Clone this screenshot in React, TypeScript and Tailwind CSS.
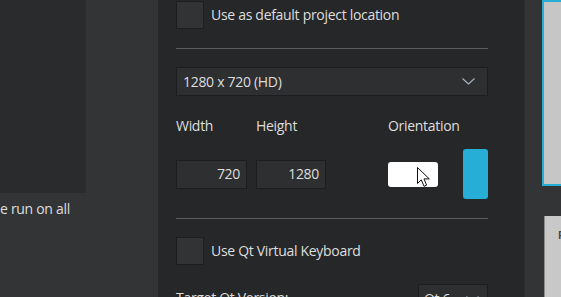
import React from 'react';

function Chevron() {
    return (
        <svg width="13" height="7" viewBox="0 0 13 7" fill="none" className="shrink-0">
            <path d="M0.5 0.5 L6.5 6 L12.5 0.5" stroke="#aab4be" strokeWidth="1.1" />
        </svg>
    );
}

function Cursor() {
    return (
        <svg width="14" height="21" viewBox="0 0 14 21" className="shrink-0">
            <path
                d="M0.5 0.5 L0.5 16.5 L4.3 12.8 L7 19.3 L9.6 18.2 L7 11.9 L12.3 11.9 Z"
                fill="#ffffff"
                stroke="#111111"
                strokeWidth="1"
                strokeLinejoin="round"
            />
        </svg>
    );
}

function Checkbox({ label }: { label: string }) {
    return (
        <div className="flex items-center gap-[7px] h-[28px]">
            <div className="w-[28px] h-[28px] shrink-0 bg-[#323335] border border-[#1c1d1e]" />
            <span className="whitespace-nowrap">{label}</span>
        </div>
    );
}

export default function App() {
    return (
        <div
            className="flex h-[297px] w-[561px] overflow-hidden bg-[#333436] text-[#dedede] text-[14px] leading-[18px] tracking-[-0.3px]"
            style={{ fontFamily: '"Open Sans", "Noto Sans", sans-serif' }}
        >
            {/* left pane */}
            <div className="w-[158px] shrink-0 flex flex-col">
                <div className="w-[86px] h-[193px] shrink-0 bg-[#2a2b2d]" />
                <p className="mt-[7px] whitespace-nowrap">e run on all</p>
            </div>

            {/* settings pane */}
            <div className="w-[366px] shrink-0 bg-[#262729] pl-[18px] pr-[36px] flex flex-col">
                <div className="mt-[1px] shrink-0">
                    <Checkbox label="Use as default project location" />
                </div>

                <div className="mt-[19px] h-px shrink-0 bg-[#5b5c5e]" />

                <div className="mt-[18px] h-[29px] shrink-0 bg-[#2e2f31] border border-[#1c1d1e] flex items-center justify-between pl-[6px] pr-[12px]">
                    <span>1280 x 720 (HD)</span>
                    <Chevron />
                </div>

                <div className="mt-[21px] flex h-[18px] shrink-0">
                    <span className="w-[80px]">Width</span>
                    <span className="w-[132px]">Height</span>
                    <span>Orientation</span>
                </div>

                <div className="mt-[14px] flex items-center h-[50px] shrink-0">
                    <div className="w-[71px] h-[29px] bg-[#2e2f31] border border-[#1c1d1e] flex items-center justify-end pr-[6px]">
                        720
                    </div>
                    <div className="ml-[9px] w-[70px] h-[29px] bg-[#2e2f31] border border-[#1c1d1e] flex items-center justify-end pr-[6px]">
                        1280
                    </div>
                    <div className="ml-[62px] w-[50px] h-[25px] bg-white rounded-[3px] flex items-start pl-[29px] pt-[5px] overflow-hidden">
                        <Cursor />
                    </div>
                    <div className="ml-[25px] w-[25px] h-[50px] bg-[#27aed6] rounded-[3px]" />
                </div>

                <div className="mt-[19px] h-px shrink-0 bg-[#5b5c5e]" />

                <div className="mt-[18px] shrink-0">
                    <Checkbox label="Use Qt Virtual Keyboard" />
                </div>

                <div className="mt-[19px] flex justify-between items-start shrink-0">
                    <span className="mt-[5px]">Target Qt Version:</span>
                    <div className="w-[70px] h-[29px] bg-[#2e2f31] border border-[#1c1d1e] flex items-center justify-between pl-[5px] pr-[8px] pt-[1px]">
                        <span>Qt 6</span>
                        <Chevron />
                    </div>
                </div>
            </div>

            {/* preview strip */}
            <div className="flex-1 flex flex-col border-l border-[#2b2c2e]">
                <div className="ml-[17px] w-[40px] h-[186px] shrink-0 bg-[#c6c6c6] border-2 border-[#27aed6]" />
                <div className="ml-[19px] mt-[30px] w-[40px] flex-1 bg-[#c8c8c8] border-l border-[#8a8a8a] pl-[13px] pt-[9px]">
                    <span className="text-[10px] leading-[12px] font-bold text-[#444444]">F</span>
                </div>
            </div>
        </div>
    );
}
